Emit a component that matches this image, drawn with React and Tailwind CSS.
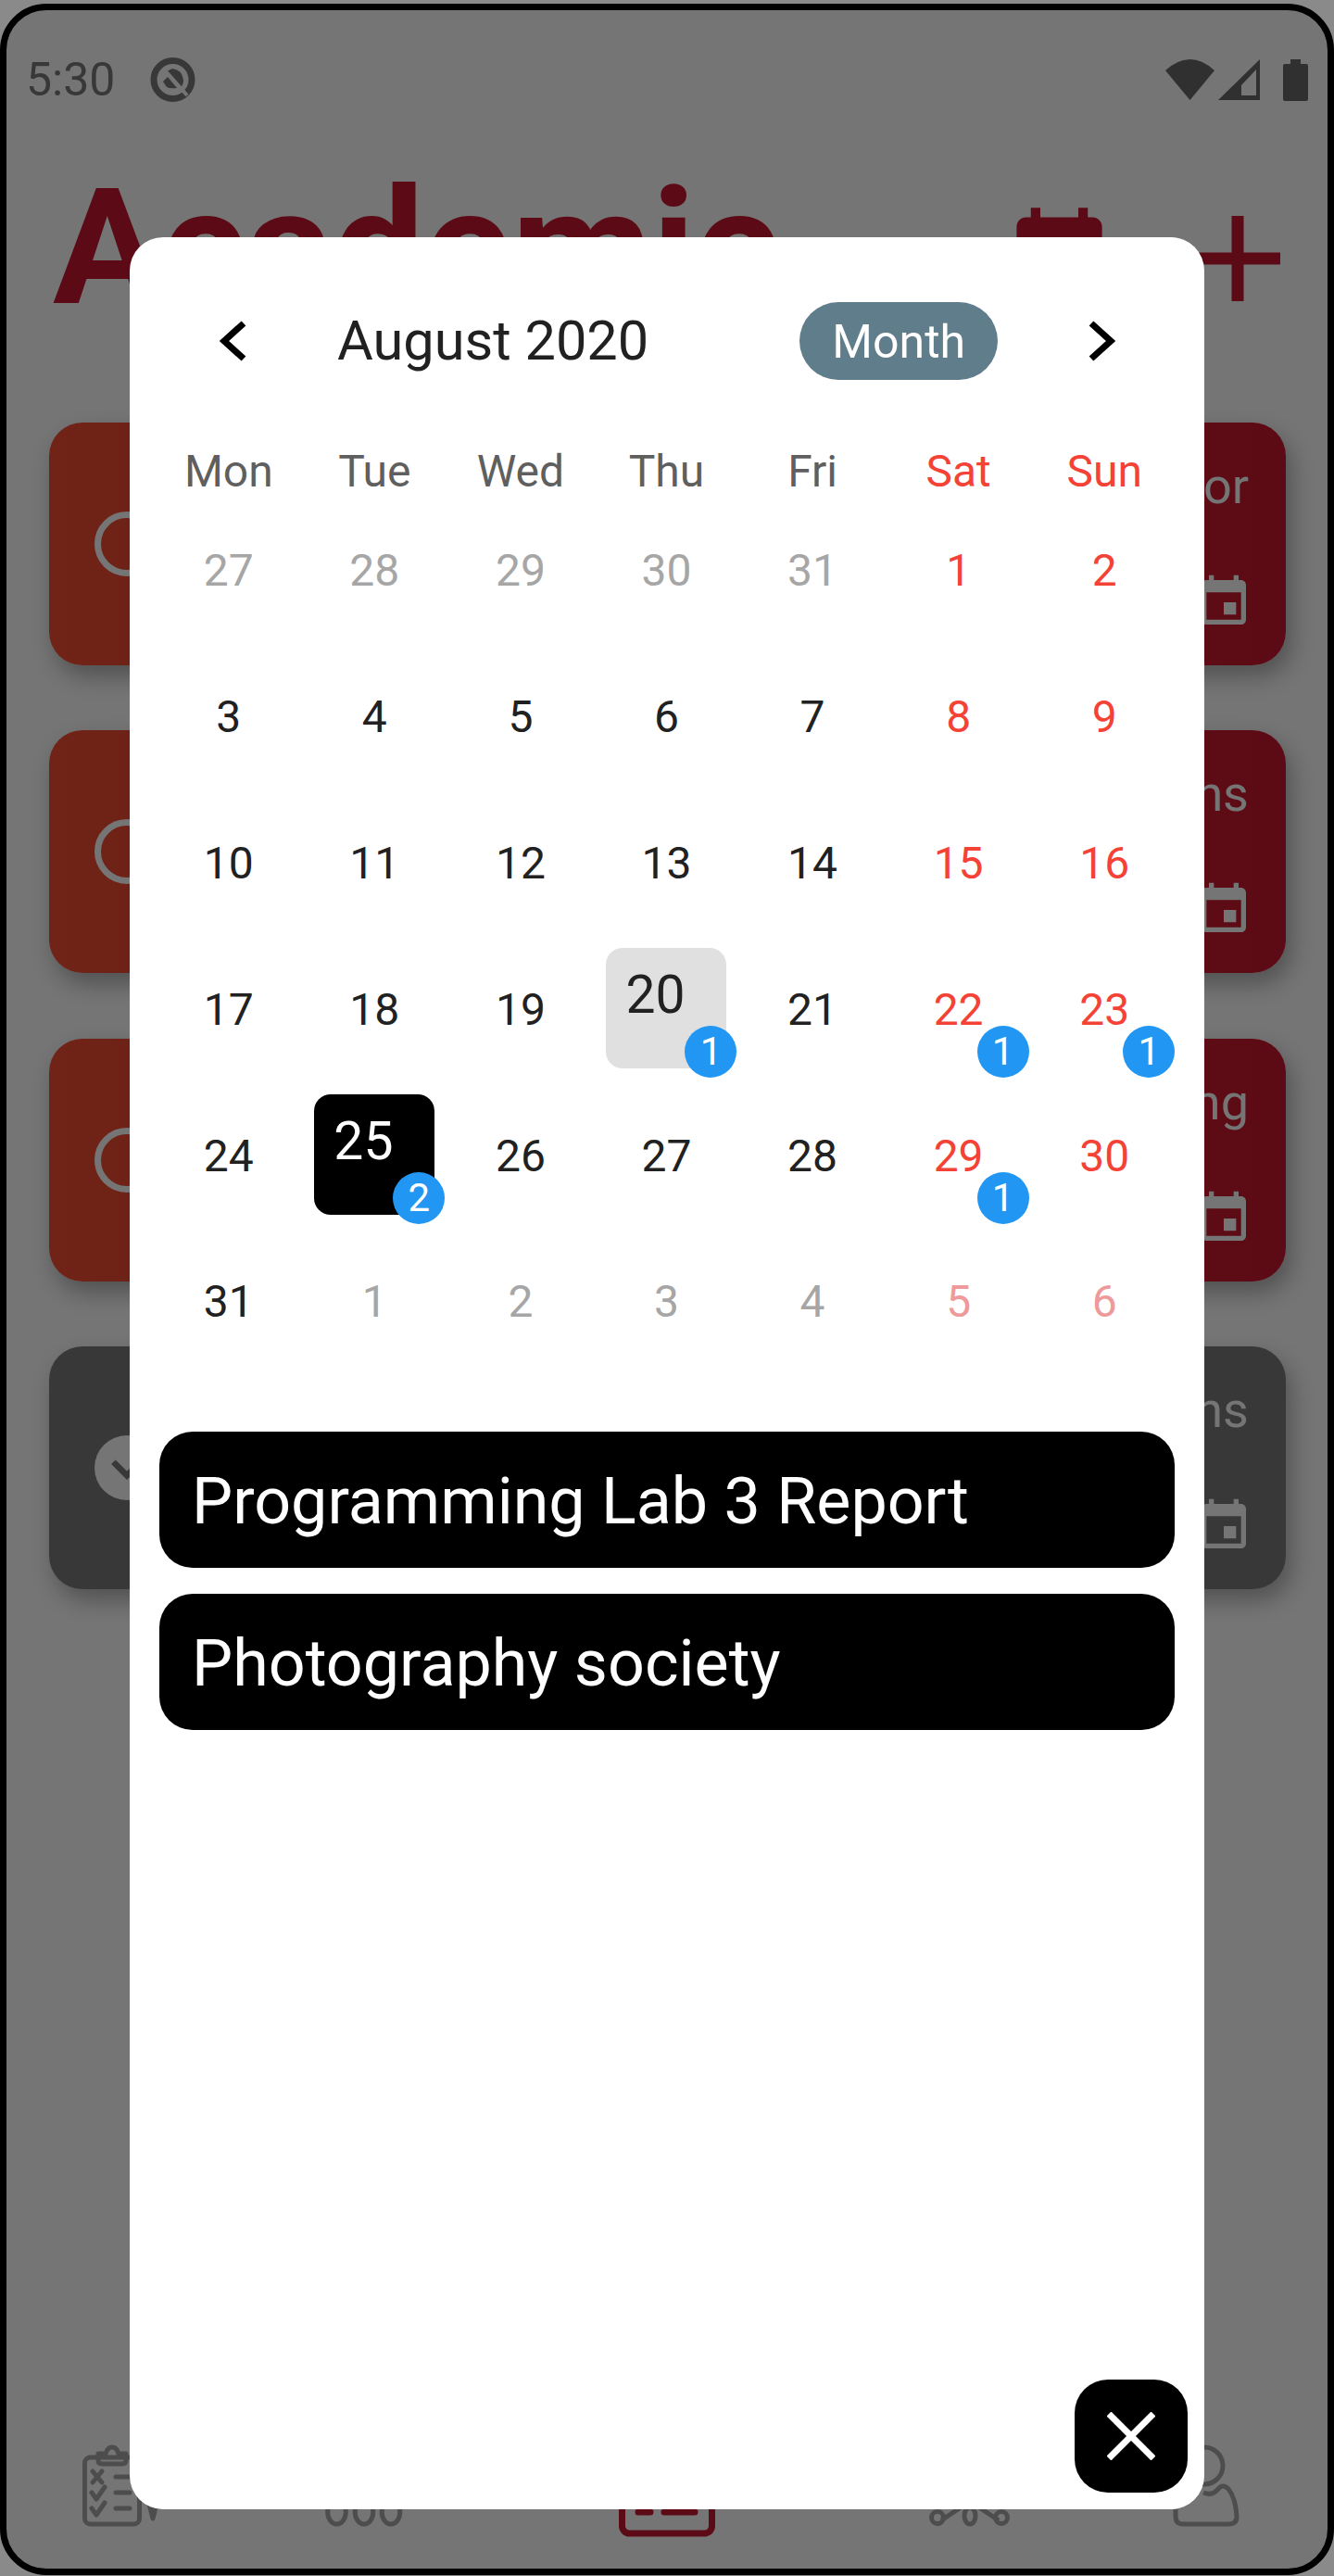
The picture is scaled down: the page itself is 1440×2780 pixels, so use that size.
import { MdEvent } from 'react-icons/md';

const WEEKDAYS = ['Mon', 'Tue', 'Wed', 'Thu', 'Fri', 'Sat', 'Sun'];

// kind: muted = other month, weekend colouring comes from the column
const DAYS = [
  { n: 27, muted: true }, { n: 28, muted: true }, { n: 29, muted: true }, { n: 30, muted: true }, { n: 31, muted: true }, { n: 1 }, { n: 2 },
  { n: 3 }, { n: 4 }, { n: 5 }, { n: 6 }, { n: 7 }, { n: 8 }, { n: 9 },
  { n: 10 }, { n: 11 }, { n: 12 }, { n: 13 }, { n: 14 }, { n: 15 }, { n: 16 },
  { n: 17 }, { n: 18 }, { n: 19 }, { n: 20, today: true, count: 1 }, { n: 21 }, { n: 22, count: 1 }, { n: 23, count: 1 },
  { n: 24 }, { n: 25, selected: true, count: 2 }, { n: 26 }, { n: 27 }, { n: 28 }, { n: 29, count: 1 }, { n: 30 },
  { n: 31 }, { n: 1, muted: true }, { n: 2, muted: true }, { n: 3, muted: true }, { n: 4, muted: true }, { n: 5, muted: true }, { n: 6, muted: true },
];

const CARDS = [
  { label: 'or', color: 'red' },
  { label: 'hs', color: 'red' },
  { label: 'ng', color: 'red' },
  { label: 'ns', color: 'done' },
];

function Badge({ count }) {
  return (
    <span className="absolute bottom-[-10px] right-[-11px] flex h-[56px] w-[56px] items-center justify-center rounded-full bg-[#2196f3] text-[42px] leading-none text-white">
      {count}
    </span>
  );
}

function DayCell({ day, index }) {
  const weekend = index % 7 >= 5;
  let color = 'text-[#212121]';
  if (weekend) color = day.muted ? 'text-[#ef9a9a]' : 'text-[#f44336]';
  else if (day.muted) color = 'text-[#a6a6a6]';

  if (day.today || day.selected) {
    return (
      <div className="flex h-[157.8px] items-center justify-center">
        <div
          className={`relative h-[130px] w-[130px] rounded-[18px] pl-[21px] pt-[22px] text-[57px] leading-none ${
            day.selected ? 'bg-black text-white' : 'bg-[#e0e0e0] text-[#212121]'
          }`}
        >
          {day.n}
          <Badge count={day.count} />
        </div>
      </div>
    );
  }

  return (
    <div className="flex h-[157.8px] items-center justify-center">
      <div className={`relative flex h-[130px] w-[130px] items-center justify-center pt-[3px] text-[48px] leading-none ${color}`}>
        {day.n}
        {day.count && <Badge count={day.count} />}
      </div>
    </div>
  );
}

function Chevron({ flip }) {
  return (
    <svg viewBox="0 0 30 46" className={`h-[46px] w-[30px] ${flip ? 'rotate-180' : ''}`}>
      <path d="M26 4 L5 23 L26 42" fill="none" stroke="#000" strokeWidth="7" />
    </svg>
  );
}

function StatusBar() {
  return (
    <div className="mt-[51px] flex h-[48px] items-center pl-[21px] text-[#383838]">
      <span className="text-[50px] leading-none">5:30</span>
      <svg viewBox="0 0 49 48" className="ml-[38px] h-[48px] w-[49px]">
        <circle cx="24.5" cy="24" r="20.5" fill="none" stroke="#383838" strokeWidth="7" />
        <path d="M18 15 L24 12 Q34 13 36 24 Q36 30 33 32 Z" fill="#383838" />
        <path d="M14 26 L19 21 L29 33 Q22 34 18 32 Z" fill="#383838" />
        <path d="M17 15 L40 41" fill="none" stroke="#757575" strokeWidth="4" />
      </svg>
      <div className="ml-auto flex items-center pr-[21px]">
        <svg viewBox="0 0 53 44" className="h-[44px] w-[53px]">
          <path d="M0 12 Q26.5 -12 53 12 L26.5 44 Z" fill="#303030" />
        </svg>
        <svg viewBox="0 0 45 44" className="ml-[4px] h-[44px] w-[45px]">
          <path fillRule="evenodd" d="M45 0 V44 H0 Z M41 11 L25 28 V39 H41 Z" fill="#303030" />
        </svg>
        <svg viewBox="0 0 27 45" className="ml-[25px] h-[45px] w-[27px]">
          <path d="M8 0 H19 V5 H25 Q27 5 27 7 V43 Q27 45 25 45 H2 Q0 45 0 43 V7 Q0 5 2 5 H8 Z" fill="#303030" />
        </svg>
      </div>
    </div>
  );
}

function TaskCard({ card }) {
  const done = card.color === 'done';
  return (
    <div
      className={`flex h-[262px] items-center rounded-[36px] pl-[49px] pr-[40px] shadow-[6px_12px_24px_rgba(0,0,0,0.3)] ${
        done ? 'bg-[#383838]' : 'bg-linear-to-r from-[#702316] to-[#5c0a15]'
      }`}
    >
      {done ? (
        <span className="flex h-[70px] w-[70px] items-center justify-center rounded-full bg-[#757575]">
          <svg viewBox="0 0 24 24" className="h-[50px] w-[50px]">
            <path d="M5 9 L12 16 L19 9" fill="none" stroke="#383838" strokeWidth="3.2" />
          </svg>
        </span>
      ) : (
        <span className="h-[70px] w-[70px] rounded-full border-[7px] border-[#757575]" />
      )}
      <div className="ml-auto flex h-full flex-col items-end pt-[42px] text-[54px] leading-none text-[#757575]">
        <span>{card.label}</span>
        <MdEvent className="mr-[-5px] mt-[66px] text-[64px]" />
      </div>
    </div>
  );
}

function BottomNav() {
  return (
    <div className="mb-[34px] mt-auto flex h-[100px] items-start pl-[81px]">
      <svg viewBox="0 0 90 90" className="h-[90px] w-[90px]" fill="none" stroke="#4d4d4d" strokeWidth="5" strokeLinecap="round" strokeLinejoin="round">
        <rect x="3.5" y="14" width="59" height="72" rx="6" />
        <path d="M18 10 H26 Q28 3 33 3 Q38 3 40 10 H48 V17 Q48 21 44 21 H22 Q18 21 18 17 Z" />
        <path d="M12 29 L22 41 M22 29 L12 41" />
        <path d="M11 52 L16 59 L25 46 M11 69 L16 76 L25 63" />
        <path d="M37 35 H52 M37 52 H52 M37 69 H52" />
        <path d="M72 60 H82 L77 80 Z" fill="#4d4d4d" />
      </svg>
      <svg viewBox="0 0 90 90" className="ml-[170px] h-[90px] w-[90px]" fill="none" stroke="#4d4d4d" strokeWidth="5">
        <ellipse cx="15.5" cy="73" rx="9.8" ry="13" />
        <ellipse cx="45" cy="73" rx="9.8" ry="13" />
        <ellipse cx="74" cy="73" rx="9.8" ry="13" />
      </svg>
      <svg viewBox="0 0 120 100" className="ml-[222px] h-[100px] w-[120px]" fill="none" stroke="#5c0a15">
        <rect x="11.5" y="10" width="97" height="86" rx="8" strokeWidth="7" />
        <path d="M29 73 H42 M57 73 H90" strokeWidth="7" strokeLinecap="round" />
      </svg>
      <svg viewBox="0 0 95 90" className="ml-[220px] h-[90px] w-[95px]" fill="none" stroke="#4d4d4d" strokeWidth="5">
        <circle cx="12" cy="79" r="6.5" />
        <ellipse cx="47" cy="77" rx="6" ry="9" />
        <circle cx="81" cy="79" r="6.5" />
        <path d="M16 82 L40 66 M78 82 L54 66" />
      </svg>
      <svg viewBox="0 0 85 90" className="ml-[165px] h-[90px] w-[85px]" fill="none" stroke="#4d4d4d" strokeWidth="5">
        <circle cx="40" cy="23" r="20" />
        <path d="M39 52 Q49 56 55 48 Q60 42 66 48 Q74 58 75 78 Q75 86 66 86 H17 Q9 86 9 78 V70" />
      </svg>
    </div>
  );
}

function CalendarDialog() {
  return (
    <div className="absolute left-[140px] top-[256px] h-[2452px] w-[1160px] rounded-[36px] bg-white">
      <div className="mt-[70px] flex h-[84px] items-center pl-[97px]">
        <Chevron />
        <span className="ml-[97px] pt-[2px] text-[59.5px] leading-none text-[#212121]">August 2020</span>
        <span className="ml-[163px] flex h-[84px] w-[214px] items-center justify-center rounded-[42px] bg-[#607d8b] pt-[2px] text-[50px] leading-none text-white">
          Month
        </span>
        <span className="ml-[97px]">
          <Chevron flip />
        </span>
      </div>

      <div className="ml-[28px] mr-[29px] mt-[72px]">
        <div className="grid h-[54px] grid-cols-7 items-center">
          {WEEKDAYS.map((d, i) => (
            <span
              key={d}
              className={`text-center text-[48px] leading-none ${i >= 5 ? 'text-[#f44336]' : 'text-[#5f5f5f]'}`}
            >
              {d}
            </span>
          ))}
        </div>
        <div className="grid grid-cols-7">
          {DAYS.map((day, i) => (
            <DayCell key={i} day={day} index={i} />
          ))}
        </div>
      </div>

      <div className="mx-[32px] mt-[62px] flex flex-col gap-[28px]">
        {['Programming Lab 3 Report', 'Photography society'].map((title) => (
          <div key={title} className="flex h-[147px] items-center rounded-[36px] bg-black pl-[35px] pt-[3px] text-[70px] leading-none text-white">
            {title}
          </div>
        ))}
      </div>

      <button className="absolute bottom-[18px] right-[18px] flex h-[122px] w-[122px] items-center justify-center rounded-[36px] bg-black">
        <svg viewBox="0 0 52 52" className="h-[52px] w-[52px]">
          <path d="M2 2 L50 50 M50 2 L2 50" stroke="#fff" strokeWidth="7" />
        </svg>
      </button>
    </div>
  );
}

export default function App() {
  return (
    <div className="relative h-[2780px] w-[1440px] overflow-hidden bg-[#8a8a8a] pb-[1px] pt-[4px] font-[Roboto,sans-serif]">
      <div className="flex h-[2775px] flex-col overflow-hidden rounded-[50px] border-[7px] border-black bg-[#757575]">
        <StatusBar />

        <div className="mt-[70px] flex h-[175px] items-start pl-[50px] text-[#5c0a15]">
          <span className="text-[175px] font-bold leading-none">Academic</span>
          <MdEvent className="ml-auto mt-[39px] text-[123px]" />
          <svg viewBox="0 0 92 92" className="ml-[85px] mr-[51px] mt-[53px] h-[92px] w-[92px]">
            <path d="M0 46 H92 M46 0 V92" stroke="#5c0a15" strokeWidth="13" />
          </svg>
        </div>

        <div className="ml-[46px] mr-[45px] mt-[101px] flex flex-col gap-[70.33px]">
          {CARDS.map((card) => (
            <TaskCard key={card.label} card={card} />
          ))}
        </div>

        <BottomNav />
      </div>

      <CalendarDialog />
    </div>
  );
}
